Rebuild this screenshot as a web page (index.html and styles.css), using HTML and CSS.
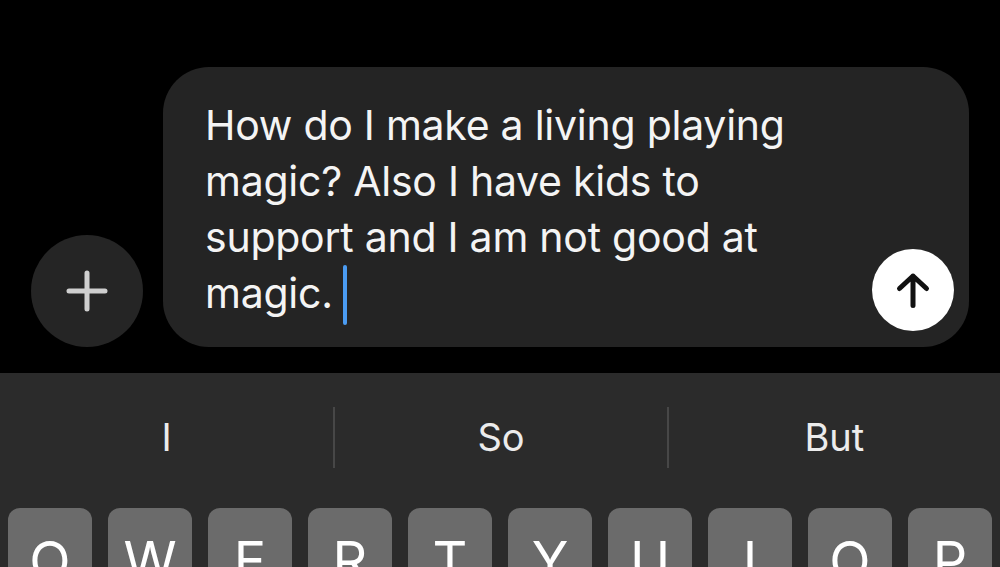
FILE: index.html
```html
<!DOCTYPE html>
<html lang="en">
<head>
  <meta charset="UTF-8">
  <meta name="viewport" content="width=device-width, initial-scale=1.0">
  <title>Message</title>
  <link rel="stylesheet" href="styles.css">
</head>
<body>

  <div class="composer">
    <button class="boton-mas" aria-label="Add">
      <svg width="44" height="44" viewBox="0 0 44 44">
        <path d="M22 4 V40 M4 22 H40" stroke="#cfcfcf" stroke-width="5" stroke-linecap="round" fill="none"/>
      </svg>
    </button>

    <div class="burbuja">
      <p class="texto">How do I make a living playing<br>magic? Also I have kids to<br>support and I am not good at<br>magic.<span class="cursor"></span></p>
      <button class="boton-enviar" aria-label="Send">
        <svg width="82" height="82" viewBox="0 0 82 82">
          <path d="M41 56.5 V27 M27.5 39.5 L41 27 L54.5 39.5" stroke="#111" stroke-width="5" stroke-linecap="round" stroke-linejoin="round" fill="none"/>
        </svg>
      </button>
    </div>
  </div>

  <div class="teclado">
    <div class="sugerencias">
      <span>I</span>
      <span>So</span>
      <span>But</span>
    </div>
    <div class="fila-teclas">
      <div class="tecla">Q</div>
      <div class="tecla">W</div>
      <div class="tecla">E</div>
      <div class="tecla">R</div>
      <div class="tecla">T</div>
      <div class="tecla">Y</div>
      <div class="tecla">U</div>
      <div class="tecla">I</div>
      <div class="tecla">O</div>
      <div class="tecla">P</div>
    </div>
  </div>

</body>
</html>
```

FILE: styles.css
```css
body {
  margin: 0;
  background-color: #000;
  font-family: Inter, "Open Sans", sans-serif;
  color: #f2f2f2;
  width: 1000px;
  height: 567px;
  overflow: hidden;
}

.composer {
  display: flex;
  align-items: flex-end;
  gap: 20px;
  padding: 67px 31px 0 31px;
}

.boton-mas {
  flex: 0 0 auto;
  width: 112px;
  height: 112px;
  border: none;
  border-radius: 50%;
  background-color: #252525;
  display: flex;
  align-items: center;
  justify-content: center;
  padding: 0;
}

.burbuja {
  flex: 1;
  height: 280px;
  box-sizing: border-box;
  background-color: #242424;
  border-radius: 46px;
  padding: 30px 15px 16px 42px;
  display: flex;
  justify-content: space-between;
  align-items: flex-end;
}

.texto {
  margin: 0;
  align-self: flex-start;
  font-size: 41px;
  line-height: 56px;
  letter-spacing: -0.25px;
  color: #f4f4f4;
}

.cursor {
  display: inline-block;
  width: 4px;
  height: 60px;
  margin-left: 10px;
  border-radius: 2px;
  background-color: #4b9cf2;
  vertical-align: -17px;
}

.boton-enviar {
  flex: 0 0 auto;
  width: 82px;
  height: 82px;
  border: none;
  border-radius: 50%;
  background-color: #fff;
  padding: 0;
  display: flex;
  align-items: center;
  justify-content: center;
}

.teclado {
  margin-top: 26px;
  background-color: #2b2b2b;
  height: 194px;
  overflow: hidden;
}

.sugerencias {
  display: grid;
  grid-template-columns: 1fr 1fr 1fr;
  align-items: center;
  height: 129px;
}

.sugerencias span {
  text-align: center;
  font-size: 38px;
  color: #ececec;
  line-height: 61px;
}

.sugerencias span + span {
  border-left: 2px solid #474747;
}

.fila-teclas {
  display: flex;
  gap: 16px;
  padding: 6px 8px 0;
}

.tecla {
  width: 84px;
  height: 95px;
  flex: 0 0 84px;
  background-color: #6b6b6b;
  border-radius: 12px;
  text-align: center;
  font-size: 54px;
  line-height: 1;
  padding-top: 26px;
  box-sizing: border-box;
  color: #fff;
}
```
